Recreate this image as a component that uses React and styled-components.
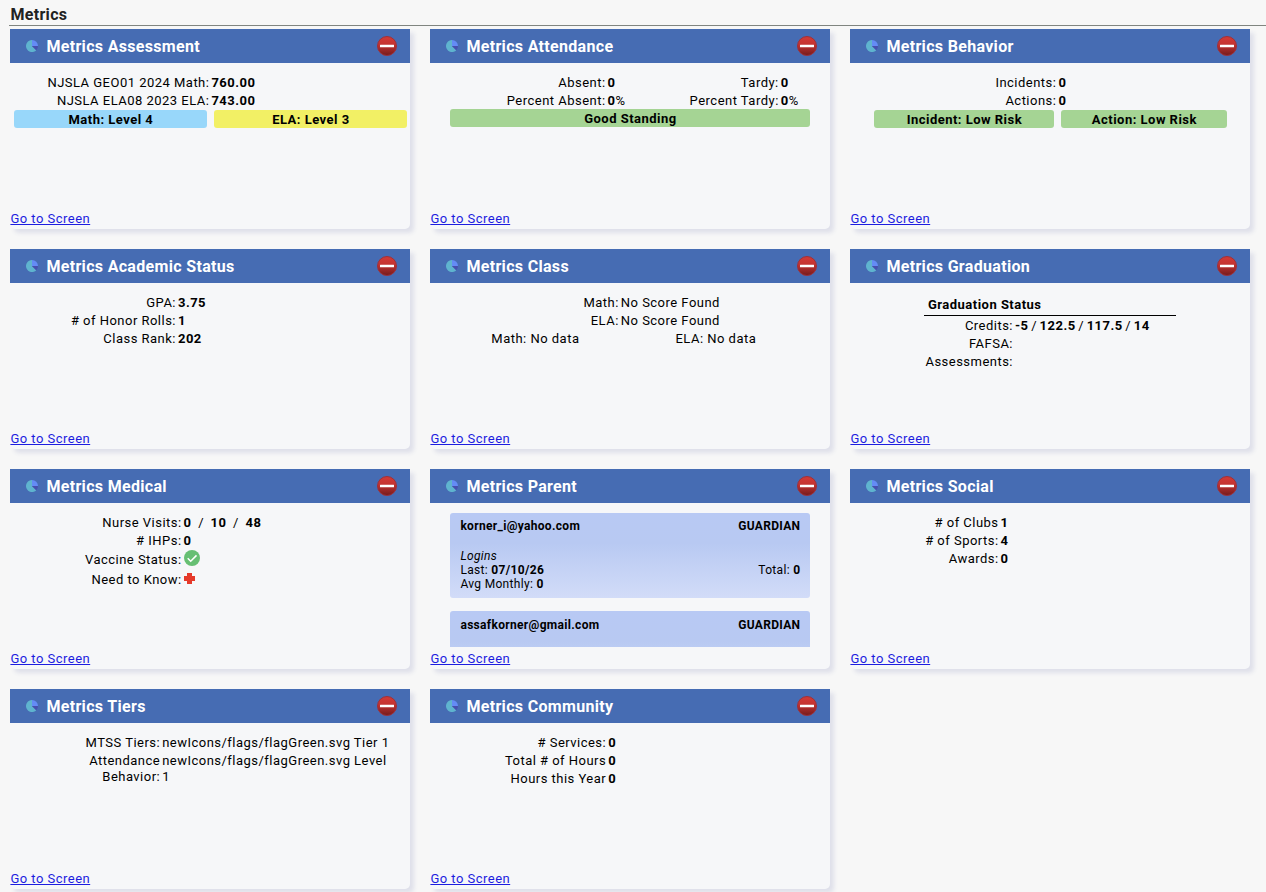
import React from "react";
import styled, { createGlobalStyle } from "styled-components";

const GlobalStyle = createGlobalStyle`
  * { box-sizing: border-box; }
  body {
    margin: 0;
    background: #f7f7f7;
    color: #000;
    font-family: Roboto, "Liberation Sans", sans-serif;
    font-size: 13px;
    line-height: 16px;
    letter-spacing: 0.48px;
  }
`;

const Page = styled.main`
  height: 892px;
  overflow: hidden;
  padding-left: 9px;
`;

const PageTitle = styled.h1`
  margin: 0;
  height: 26px;
  padding: 5px 0 0 1.4px;
  border-bottom: 1px solid #808580;
  font-size: 16px;
  line-height: 19px;
  font-weight: 700;
  letter-spacing: 0.32px;
  color: #222;
`;

const CardGrid = styled.div`
  display: grid;
  grid-template-columns: repeat(3, 400px);
  grid-auto-rows: 200px;
  gap: 20px;
  padding: 3px 0 0 1.4px;
`;

const CardBox = styled.section`
  display: flex;
  flex-direction: column;
  background: #f6f7f9;
  border-radius: 0 0 5px 5px;
  box-shadow: 4px 4px 4px #dfe0ea;
`;

const CardHeader = styled.header`
  display: flex;
  align-items: center;
  height: 34px;
  padding: 0 13px 0 16px;
  background: #466cb3;
`;

const CardTitle = styled.h2`
  flex: 1;
  margin: 0 0 0 8px;
  padding-top: 2px;
  font-size: 16px;
  line-height: 20px;
  font-weight: 700;
  letter-spacing: 0.32px;
  color: #fff;
`;

const CardBody = styled.div`
  height: 144px;
  padding-top: ${(p) => p.$top ?? 12}px;
  overflow: hidden;
`;

const ScreenLink = styled.a`
  align-self: flex-start;
  margin-top: 4px;
  color: #1d1de0;
  line-height: 16px;
`;

const Fields = styled.div`
  display: grid;
  grid-template-columns: ${(p) => p.$columns};
  column-gap: 2px;
  row-gap: 2px;
`;

const Label = styled.span`
  text-align: right;
  white-space: pre-line;
  line-height: ${(p) => p.$line ?? 16}px;
`;

const Value = styled.span`
  display: block;
  white-space: pre;
`;

const Separated = styled.span`
  word-spacing: ${(p) => p.$spacing}px;
`;

const Badges = styled.div`
  display: grid;
  grid-template-columns: ${(p) => p.$columns};
  column-gap: 7px;
  padding: ${(p) => p.$pad};
`;

const Badge = styled.div`
  height: 18px;
  border-radius: 3px;
  background: ${(p) => p.$color};
  font-weight: 700;
  line-height: 20px;
  text-align: center;
`;

const NoData = styled.span`
  line-height: 16px;
  text-align: center;
`;

const StatusHeading = styled.h3`
  width: 252px;
  height: 19px;
  margin: 0 0 2px 74px;
  padding-left: 3.6px;
  border-bottom: 1px solid #000;
  font-size: 13px;
  line-height: 16px;
  font-weight: 700;
`;

const Contact = styled.article`
  height: 85px;
  margin: 0 20px 13px;
  padding: ${(p) => p.$top ?? 6}px 10px 0;
  border-radius: 3px;
  background: linear-gradient(#b8c9f4 0%, #b8c9f2 35%, #d2dcf8 100%);
  font-size: 12px;
  line-height: 14px;
  letter-spacing: 0.32px;
`;

const ContactRow = styled.div`
  display: flex;
  justify-content: space-between;
`;

const Logins = styled.div`
  margin-top: 16px;
  font-style: italic;
`;

const Svg = styled.svg`
  display: block;
  flex: none;
`;

const StatusSvg = styled(Svg)`
  margin: ${(p) => p.$margin};
`;

const PieIcon = () => (
  <Svg width="12" height="12" viewBox="0 0 12 12">
    <path d="M6 6V0a6 6 0 1 0 4.24 10.24z" fill="#5fb4cf" />
    <path d="M6 6V0a6 6 0 0 1 6 6z" fill="#648cf5" />
    <path d="M6 6h6a6 6 0 0 1-1.76 4.24z" fill="#464fae" />
  </Svg>
);

const MinusIcon = () => (
  <Svg width="20" height="20" viewBox="0 0 20 20">
    <defs>
      <linearGradient id="minus-red" x1="0" y1="0" x2="0" y2="1">
        <stop offset="0" stopColor="#d33a36" />
        <stop offset="0.4" stopColor="#c53431" />
        <stop offset="1" stopColor="#741b1c" />
      </linearGradient>
    </defs>
    <circle cx="10" cy="10" r="9.5" fill="url(#minus-red)" stroke="#a03038" />
    <rect x="3" y="8.7" width="14" height="2.6" rx="0.4" fill="#fff" />
  </Svg>
);

const CheckIcon = () => (
  <StatusSvg $margin="-1px 0 0 0.4px" width="16" height="16" viewBox="0 0 16 16">
    <circle cx="8" cy="8" r="8" fill="#66bf73" />
    <path d="M3.7 8.3l3 3 5.8-5.9" fill="none" stroke="#fff" strokeWidth="1.5" />
  </StatusSvg>
);

const CrossIcon = () => (
  <StatusSvg $margin="2px 0 0 0.4px" width="11" height="11" viewBox="0 0 11 11">
    <path d="M3 0h5v3h3v5H8v3H3V8H0V3h3z" fill="#e53a2b" />
  </StatusSvg>
);

function Card({ title, top, children }) {
  return (
    <CardBox>
      <CardHeader>
        <PieIcon />
        <CardTitle>Metrics {title}</CardTitle>
        <MinusIcon />
      </CardHeader>
      <CardBody $top={top}>{children}</CardBody>
      <ScreenLink href="#">Go to Screen</ScreenLink>
    </CardBox>
  );
}

function FieldList({ columns, rows }) {
  return (
    <Fields $columns={columns}>
      {rows.map(([label, value]) => (
        <React.Fragment key={label}>
          <Label>{label}</Label>
          <Value>{value}</Value>
        </React.Fragment>
      ))}
    </Fields>
  );
}

const B = ({ children }) => <b>{children}</b>;

export default function App() {
  return (
    <>
      <GlobalStyle />
      <Page>
        <PageTitle>Metrics</PageTitle>
        <CardGrid>
          <Card title="Assessment">
            <FieldList
              columns="199px 1fr"
              rows={[
                ["NJSLA GEO01 2024 Math:", <B>760.00</B>],
                ["NJSLA ELA08 2023 ELA:", <B>743.00</B>],
              ]}
            />
            <Badges $columns="193px 193px" $pad="1px 0 0 4px">
              <Badge $color="#98d7fa">Math: Level 4</Badge>
              <Badge $color="#f2f065">ELA: Level 3</Badge>
            </Badges>
          </Card>
          <Card title="Attendance">
            <FieldList
              columns="175.2px 44.4px 124.8px 1fr"
              rows={[
                ["Absent:", <B>0</B>],
                ["Tardy:", <B>0</B>],
                ["Percent Absent:", <><b>0</b>%</>],
                ["Percent Tardy:", <><b>0</b>%</>],
              ]}
            />
            <Badges $columns="1fr" $pad="0 20px">
              <Badge $color="#a5d494">Good Standing</Badge>
            </Badges>
          </Card>
          <Card title="Behavior">
            <FieldList
              columns="206px 1fr"
              rows={[
                ["Incidents:", <B>0</B>],
                ["Actions:", <B>0</B>],
              ]}
            />
            <Badges $columns="180px 166px" $pad="1px 0 0 24px">
              <Badge $color="#a5d494">Incident: Low Risk</Badge>
              <Badge $color="#a5d494">Action: Low Risk</Badge>
            </Badges>
          </Card>
          <Card title="Academic Status">
            <FieldList
              columns="165.6px 1fr"
              rows={[
                ["GPA:", <B>3.75</B>],
                ["# of Honor Rolls:", <B>1</B>],
                ["Class Rank:", <B>202</B>],
              ]}
            />
          </Card>
          <Card title="Class">
            <FieldList
              columns="188.4px 1fr"
              rows={[
                ["Math:", "No Score Found"],
                ["ELA:", "No Score Found"],
              ]}
            />
            <Badges $columns="174px 173px" $pad="2px 0 0 18px">
              <NoData>Math: No data</NoData>
              <NoData>ELA: No data</NoData>
            </Badges>
          </Card>
          <Card title="Graduation" top={14}>
            <StatusHeading>Graduation Status</StatusHeading>
            <FieldList
              columns="162.6px 1fr"
              rows={[
                [
                  "Credits:",
                  <Separated $spacing={-1.1}>
                    <b>-5</b>{" / "}<b>122.5</b>{" / "}<b>117.5</b>{" / "}<b>14</b>
                  </Separated>,
                ],
                ["FAFSA:", null],
                ["Assessments:", null],
              ]}
            />
          </Card>
          <Card title="Medical">
            <Fields $columns="171.2px 1fr">
              <Label>Nurse Visits:</Label>
              <Value>
                <Separated $spacing={-0.4}>
                  <b>0</b>{"  /  "}<b>10</b>{"  /  "}<b>48</b>
                </Separated>
              </Value>
              <Label># IHPs:</Label>
              <Value><b>0</b></Value>
              <Label $line={18}>Vaccine Status:</Label>
              <CheckIcon />
              <Label $line={18}>Need to Know:</Label>
              <CrossIcon />
            </Fields>
          </Card>
          <Card title="Parent" top={10}>
            <Contact>
              <ContactRow><b>korner_i@yahoo.com</b><b>GUARDIAN</b></ContactRow>
              <Logins>Logins</Logins>
              <ContactRow>
                <span>Last: <b>07/10/26</b></span>
                <span>Total: <b>0</b></span>
              </ContactRow>
              <div>Avg Monthly: <b>0</b></div>
            </Contact>
            <Contact $top={7}>
              <ContactRow><b>assafkorner@gmail.com</b><b>GUARDIAN</b></ContactRow>
            </Contact>
          </Card>
          <Card title="Social">
            <FieldList
              columns="148.2px 1fr"
              rows={[
                ["# of Clubs", <B>1</B>],
                ["# of Sports:", <B>4</B>],
                ["Awards:", <B>0</B>],
              ]}
            />
          </Card>
          <Card title="Tiers">
            <FieldList
              columns="149.8px 1fr"
              rows={[
                ["MTSS Tiers:", "newIcons/flags/flagGreen.svg Tier 1"],
                ["Attendance\nBehavior:", "newIcons/flags/flagGreen.svg Level\n1"],
              ]}
            />
          </Card>
          <Card title="Community">
            <FieldList
              columns="175.8px 1fr"
              rows={[
                ["# Services:", <B>0</B>],
                ["Total # of Hours", <B>0</B>],
                ["Hours this Year", <B>0</B>],
              ]}
            />
          </Card>
        </CardGrid>
      </Page>
    </>
  );
}
